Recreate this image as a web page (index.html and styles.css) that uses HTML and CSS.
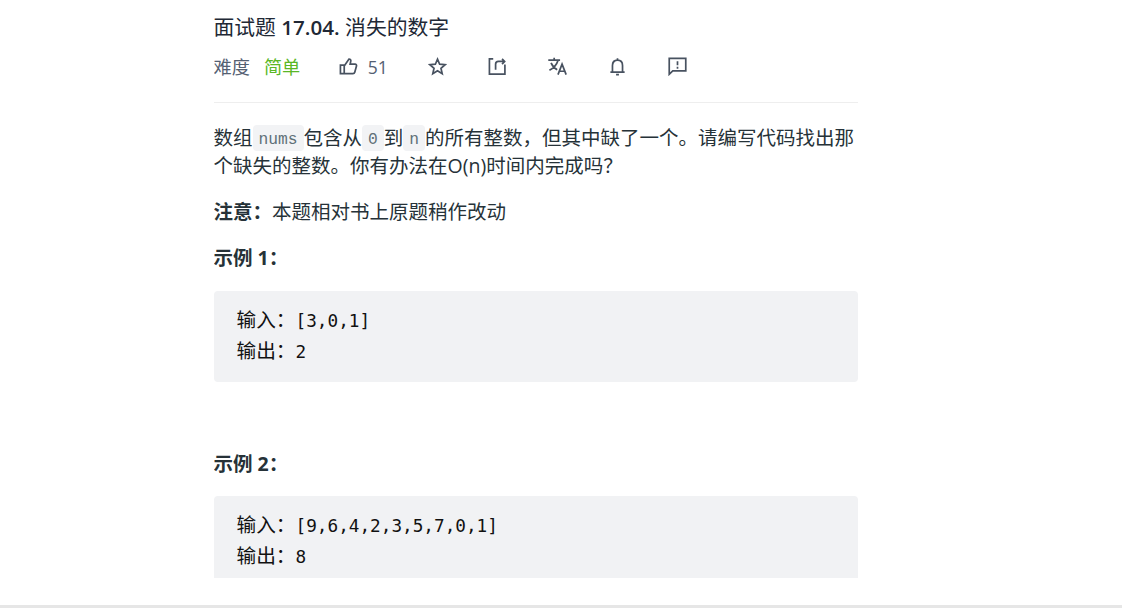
FILE: index.html
```html
<!DOCTYPE html>
<html lang="zh-CN">
<head>
    <meta charset="UTF-8">
    <meta name="viewport" content="width=device-width, initial-scale=1.0">
    <title>面试题 17.04. 消失的数字</title>
    <link rel="stylesheet" href="styles.css">
</head>
<body>
    <main class="question">
        <h1 class="title">面试题 <span class="number">17.04.</span> 消失的数字</h1>

        <div class="toolbar">
            <span class="label">难度</span>
            <span class="level">简单</span>
            <button class="tool like" aria-label="点赞">
                <svg viewBox="0 0 20 20"><path d="M1.5 8.5h4v9h-4zM5.5 9.5l5-7.4c1.6 0 2.2 1.1 1.9 2.300L11.700 7.600h5.200c1.200 0 1.800.8 1.500 1.900l-1.800 6.500c-.3 1-.9 1.500-1.900 1.500H5.500"/></svg>
                <span>51</span>
            </button>
            <button class="tool" aria-label="收藏">
                <svg viewBox="0 0 20 20"><path d="M10 2.300l2.250 5.300 5.750.5-4.350 3.800 1.300 5.600L10 14.500l-4.950 3 1.300-5.600L2 8.100l5.750-.5z"/></svg>
            </button>
            <button class="tool" aria-label="分享">
                <svg viewBox="0 0 20 20"><path d="M5.500 2H1.500v16h16.300V8M8 13.500V7.700c0-2 1-3 3-3h6.500M14.800 2L17.500 4.700l-2.700 2.700"/></svg>
            </button>
            <button class="tool" aria-label="切换语言">
                <svg viewBox="0 0 20 20"><path d="M.3 3.300h12.400M6.500.8v2.500M10.500 3.600C9.200 8 6 11.500 1.500 14M3.200 6.200c1.500 3.500 3.800 5.800 6.500 7.200M10.500 18.500l4.300-11 4.300 11M11.900 15h5.800"/></svg>
            </button>
            <button class="tool" aria-label="通知">
                <svg viewBox="0 0 20 20"><path d="M2.500 16h15M4.700 15.600V9c0-3.500 2.200-5.700 5.300-5.700s5.300 2.200 5.300 5.700v6.600M10 3.300V1.200M8.500 18.500h3"/></svg>
            </button>
            <button class="tool" aria-label="反馈">
                <svg viewBox="0 0 20 20"><path d="M1.300 1.500h17.400v13.200H5l-3.700 3.500zM10 4.500v4.300M10 10.300v2"/></svg>
            </button>
        </div>

        <div class="content">
            <p>数组<code>nums</code>包含从<code>0</code>到<code>n</code>的所有整数，但其中缺了一个。请编写代码找出那<br>个缺失的整数。你有办法在O(n)时间内完成吗？</p>
            <p><strong>注意：</strong>本题相对书上原题稍作改动</p>
            <p><strong>示例 1：</strong></p>
            <pre><b>输入：</b>[3,0,1]
<b>输出：</b>2</pre>
            <p class="next"><strong>示例 2：</strong></p>
            <pre><b>输入：</b>[9,6,4,2,3,5,7,0,1]
<b>输出：</b>8</pre>
        </div>
    </main>
    <div class="bottom-bar"></div>
</body>
</html>
```

FILE: styles.css
```css
* {
    margin: 0;
    padding: 0;
    box-sizing: border-box;
}

body {
    height: 612px;
    background: #fff;
    color: #263238;
    font-family: "Open Sans", "Noto Sans CJK SC", sans-serif;
    font-size: 19.5px;
    line-height: 28px;
    overflow: hidden;
}

.question {
    width: 644px;
    height: 578px;
    margin-left: 213.5px;
    padding-top: 13px;
    overflow: hidden;
}

.title {
    height: 28px;
    font-size: 20.8px;
    font-weight: 400;
    color: #212835;
    white-space: nowrap;
}

.title .number {
    font-size: 20.6px;
    font-weight: 600;
}

.toolbar {
    display: flex;
    align-items: center;
    height: 62px;
    padding-bottom: 10px;
    border-bottom: 1px solid #eee;
    font-size: 18.2px;
    color: #546072;
}

.level {
    margin-left: 14px;
    color: #5ab726;
}

.tool {
    display: flex;
    align-items: center;
    width: 20px;
    margin-right: 40px;
    border: none;
    background: none;
    font: inherit;
    font-size: 17.5px;
    color: inherit;
}

.tool svg {
    flex: none;
    width: 19px;
    height: 19px;
    fill: none;
    stroke: #485260;
    stroke-width: 1.8;
}

.like {
    width: 49px;
    margin-left: 38.5px;
    gap: 10px;
}

.content {
    padding-top: 21px;
}

.content p {
    margin-bottom: 18px;
    white-space: nowrap;
}

.content p code {
    padding: 5px 6px 2px;
    border-radius: 4px;
    background: #f2f3f5;
    color: #607078;
    font-family: "Liberation Mono", monospace;
    font-size: 16.25px;
    line-height: 1;
    vertical-align: 1px;
}

pre {
    height: 91px;
    margin-top: 19px;
    padding: 15px 23px 0;
    border-radius: 4px;
    background: #f1f2f4;
    color: #111;
    font-family: "DejaVu Sans Mono", monospace;
    font-size: 17.7px;
    line-height: 31.2px;
}

pre b {
    font-family: "Noto Sans CJK SC", sans-serif;
    font-size: 19.7px;
    font-weight: 400;
    line-height: 1;
}

.content .next {
    margin-top: 68px;
}

.content .next + pre {
    margin-top: 17px;
}

.bottom-bar {
    height: 3px;
    margin-top: 27px;
    background: #e6e6e6;
}
```
